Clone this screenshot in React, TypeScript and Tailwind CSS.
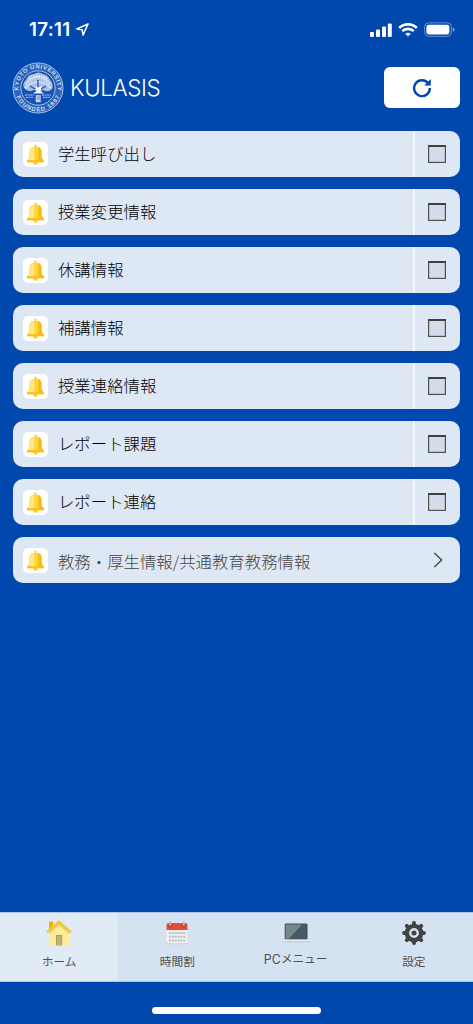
import type { ReactNode } from "react";

const notices = [
  "学生呼び出し",
  "授業変更情報",
  "休講情報",
  "補講情報",
  "授業連絡情報",
  "レポート課題",
  "レポート連絡",
];

function StatusBar() {
  return (
    <div className="flex h-[62px] items-start justify-between pt-[18px] pr-[18px] pl-[29px] text-white">
      <div className="flex items-center gap-[5px]">
        <span className="font-['Inter'] text-[18.8px] leading-[23px] font-semibold tracking-[0.3px]">17:11</span>
        <svg width="13" height="13" viewBox="0 0 13 13" fill="none" stroke="currentColor" strokeWidth="1.6" strokeLinejoin="round">
          <path d="M12 1 L0.9 6 L6.1 6.8 L7.1 12 Z" />
        </svg>
      </div>
      <div className="flex items-center pt-[4px]">
        <svg width="22" height="14" viewBox="0 0 22 14" fill="currentColor">
          <rect x="0" y="9" width="4" height="5" rx="1.1" />
          <rect x="6" y="6.6" width="4" height="7.4" rx="1.1" />
          <rect x="12" y="3.6" width="4" height="10.4" rx="1.1" />
          <rect x="17.8" y="0.5" width="4" height="13.5" rx="1.1" />
        </svg>
        <svg className="ml-[6px]" width="20" height="14" viewBox="0 0 20 14" fill="none" stroke="currentColor" strokeWidth="2.6">
          <path d="M1.2 5 C6 0.1 14 0.1 18.8 5" />
          <path d="M4.3 8.2 C7.4 5.1 12.6 5.1 15.7 8.2" />
          <path d="M10 13.6 L7.2 10.7 C8.8 9.3 11.2 9.3 12.8 10.7 Z" fill="currentColor" stroke="none" />
        </svg>
        <svg className="ml-[6px]" width="31" height="15" viewBox="0 0 31 15">
          <rect x="0.6" y="0.9" width="26.8" height="13.4" rx="4" fill="none" stroke="white" strokeOpacity="0.4" />
          <rect x="2.4" y="2.8" width="23" height="9.6" rx="2.4" fill="white" />
          <path d="M28.8 5.2 Q30.6 6 30.6 7.6 Q30.6 9.2 28.8 10 Z" fill="white" fillOpacity="0.5" />
        </svg>
      </div>
    </div>
  );
}

function Seal() {
  return (
    <svg className="shrink-0" width="52" height="52" viewBox="0 0 52 52" fill="none">
      <defs>
        <path id="sealTop" d="M10.4 38 A19.6 19.6 0 1 1 41.6 38" />
        <path id="sealBottom" d="M3.4 31 A23.1 23.1 0 0 0 48.6 31" />
      </defs>
      <circle cx="26" cy="26" r="25" fill="#2a63b9" stroke="#a9c2e6" strokeWidth="1" />
      <circle cx="26" cy="26" r="23.6" stroke="#5c88cb" strokeWidth="0.5" />
      <circle cx="26" cy="26" r="17.2" fill="#1552b2" stroke="#b7cbe9" strokeWidth="0.9" />
      <g fill="#d3dff2" fontFamily="Liberation Sans" fontSize="5.8" fontWeight="bold">
        <text>
          <textPath href="#sealTop" startOffset="50%" textAnchor="middle" textLength="66">KYOTO UNIVERSITY</textPath>
        </text>
        <text>
          <textPath href="#sealBottom" startOffset="50%" textAnchor="middle" textLength="55">FOUNDED 1897</textPath>
        </text>
      </g>
      <path d="M12 26 Q10 21 14 18 Q16 12 22 12 Q26 9 31 12 Q36 13 38 18 Q42 22 40 27 Q36 31 31 28 Q27 30 22 28 Q16 31 12 26 Z" fill="#a8c0e4" />
      <path d="M14 22 Q26 8 38 22 M13 26 Q26 14 39 26 M17 17 Q26 11 35 17" stroke="#e3ebf7" strokeWidth="2" strokeDasharray="1.5 1" />
      <path d="M18 24 L23 27 M34 24 L29 27 M26 18 V25" stroke="#1552b2" strokeWidth="1.3" />
      <path d="M23.5 24 L24.5 29 L21 31.5 H32 L28.6 29 L29.5 24 L26.5 26 Z" fill="#f4f8ff" />
      <path d="M13 33 H22 M30 33 H39 M14 35.3 H21 M31 35.3 H38" stroke="#b7cbe9" strokeWidth="1" strokeDasharray="2 0.6" />
      <rect x="23.7" y="33.2" width="5" height="7" fill="#c8d7ee" />
      <path d="M24.5 35 H28 M24.5 37 H28" stroke="#2a63b9" strokeWidth="0.6" />
    </svg>
  );
}

function Bell() {
  return (
    <div className="flex h-[25px] w-[25px] shrink-0 items-center justify-center rounded-[5px] bg-white">
      <svg width="19" height="21" viewBox="0 0 19 21">
        <circle cx="9.5" cy="1.8" r="1.3" fill="#fdd23b" />
        <circle cx="9.5" cy="18.6" r="2.2" fill="#ffc928" />
        <path d="M3.4 7.5 Q3.6 2.8 9.5 2.7 Q15.4 2.8 15.6 7.5 V12.5 Q15.8 14.6 18 16.4 V18.2 H1 V16.4 Q3.2 14.6 3.4 12.5 Z" fill="#fdd23b" />
        <path d="M3.9 7.2 Q4.3 3.8 8.4 3.2 V16.4 H1.6 Q3.7 14.6 3.9 12.5 Z" fill="#ffe782" />
        <path d="M12 3.1 Q15.4 4 15.6 7.5 V12.5 Q15.8 14.6 18 16.4 H12.4 Z" fill="#f8bd12" />
        <path d="M1 16.3 H18 V18.2 H1 Z" fill="#f9bd17" />
      </svg>
    </div>
  );
}

function NoticeRow({ label }: { label: string }) {
  return (
    <li className="flex h-[46px] overflow-hidden rounded-[10px] bg-[#dee8f4]">
      <div className="flex flex-1 items-center gap-[10.4px] pl-[10px]">
        <Bell />
        <span className="pb-[2px] text-[16.4px] leading-[24px] font-light text-black">{label}</span>
      </div>
      <div className="flex w-[47px] items-center justify-center border-l-2 border-[#f5f9fd]">
        <svg className="mr-[2px]" width="18" height="18" viewBox="0 0 18 18">
          <rect x="0.6" y="0.6" width="16.8" height="16.8" fill="#d2dcea" stroke="#505050" strokeWidth="1.2" />
          <path d="M0 1 H18" stroke="#404040" strokeWidth="2" />
        </svg>
      </div>
    </li>
  );
}

function HomeIcon() {
  return (
    <svg width="26" height="26" viewBox="0 0 26 26">
      <path d="M3 1.5 H7.2 V8 L3 11 Z" fill="#f3ad0c" />
      <path d="M13 3 L23.3 11.5 V25.3 H3 V11.5 Z" fill="#ffec94" />
      <path d="M13 5.2 L23.3 14 V12 L13 3 L3 12 V14 Z" fill="#d9c88a" />
      <path d="M13 0.3 L25.9 11.4 L24.5 13 L13 3.4 L1.7 13 L0.2 11.4 Z" fill="#fcc71d" />
      <rect x="10" y="15" width="6.2" height="10.3" fill="#a9a06d" />
      <rect x="11" y="16" width="4.2" height="9.3" fill="#bdb477" />
    </svg>
  );
}

function CalendarIcon() {
  return (
    <svg width="22" height="24" viewBox="0 0 22 24">
      <rect x="0.5" y="2" width="21" height="21.3" rx="2" fill="#c9cfd2" />
      <rect x="0.5" y="2" width="21" height="20.3" rx="2" fill="#f1f1f1" />
      <path d="M0.5 9 V4 Q0.5 2 2.5 2 H19.5 Q21.5 2 21.5 4 V9 Z" fill="#e84b3d" />
      <path d="M4.2 3.7 V4.5 M17.8 3.7 V4.5" stroke="#b83227" strokeWidth="3.4" strokeLinecap="round" />
      <path d="M4.2 1 V4 M17.8 1 V4" stroke="#b7c0c5" strokeWidth="1.9" strokeLinecap="round" />
      <path d="M3 12 H19.4 M3 15.8 H19.4 M3 19.4 H19.4" stroke="#b9bfc3" strokeWidth="2" strokeDasharray="2 0.85" />
    </svg>
  );
}

function LaptopIcon() {
  return (
    <svg width="28" height="20" viewBox="0 0 28 20">
      <rect x="2.7" y="0.5" width="22.8" height="16.5" rx="1.2" fill="#3c5060" />
      <rect x="3.7" y="1.5" width="20.8" height="14.5" fill="#465967" />
      <path d="M3.7 1.5 H20 L6.5 16 H3.7 Z" fill="#78858b" />
      <path d="M0.3 16.6 H27.7 V18 Q27 19.3 25.5 19.3 H2.5 Q1 19.3 0.3 18 Z" fill="#c3c8ca" />
      <rect x="0.3" y="16.6" width="27.4" height="1.5" fill="#eceeed" />
    </svg>
  );
}

function GearIcon() {
  return (
    <svg width="24" height="24" viewBox="-12 -12 24 24">
      <g fill="none" stroke="#434343" strokeWidth="4" strokeLinecap="round">
        <path d="M0 -9.9 V-7 M0 9.9 V7 M-9.9 0 H-7 M9.9 0 H7" />
        <path d="M-7.2 -7.2 L-5 -5 M7.2 7.2 L5 5 M-7.2 7.2 L-5 5 M7.2 -7.2 L5 -5" />
      </g>
      <circle r="7.1" fill="none" stroke="#434343" strokeWidth="4.4" />
      <circle r="2.5" fill="#434343" />
    </svg>
  );
}

function Tab({ icon, active, children }: { icon: ReactNode; active?: boolean; children: ReactNode }) {
  return (
    <a
      className={`flex flex-1 flex-col items-center border-y border-[#afc5e1] pt-[7px] text-[11.7px] leading-[18px] text-[#505050] ${
        active ? "bg-[#e1ebf6]" : "bg-[#d5e2f2]"
      }`}
    >
      <div className="flex h-[26px] items-center">{icon}</div>
      {children}
    </a>
  );
}

export default function App() {
  return (
    <div className="flex h-[1024px] w-[473px] flex-col bg-[#0047ae] font-['Noto_Sans_CJK_JP',sans-serif]">
      <StatusBar />
      <header className="flex h-[51px] items-center justify-between pr-[13px] pl-[12px]">
        <div className="flex items-center gap-[6px]">
          <Seal />
          <h1 className="font-['Inter'] text-[22.4px] leading-[30px] font-[350] tracking-[-0.35px] text-white">KULASIS</h1>
        </div>
        <button className="flex h-[41px] w-[76px] items-center justify-center rounded-[6px] bg-white">
          <svg width="20" height="20" viewBox="0 0 20 20" fill="none">
            <path d="M16.2 5.3 A7.9 7.9 0 1 0 17.9 10" stroke="#0047ae" strokeWidth="2.4" />
            <path d="M18.8 1 V7.5 H12.2 Z" fill="#0047ae" />
          </svg>
        </button>
      </header>

      <ul className="flex flex-1 flex-col gap-[12px] pt-[18.4px] pr-[13px] pl-[12.6px]">
        {notices.map((label) => (
          <NoticeRow key={label} label={label} />
        ))}
        <li className="flex h-[46px] items-center gap-[10.4px] rounded-[10px] bg-[#dee8f4] pr-[17px] pl-[10px]">
          <Bell />
          <span className="flex-1 pt-[2px] text-[16.4px] leading-[24px] font-light text-[#444]">教務・厚生情報/共通教育教務情報</span>
          <svg width="10" height="16" viewBox="0 0 10 16" fill="none" stroke="#454545" strokeWidth="1.4">
            <path d="M1.3 1 L8.7 8 L1.3 15" />
          </svg>
        </li>
      </ul>

      <nav className="flex h-[70px]">
        <Tab icon={<HomeIcon />} active>
          <span className="pt-[6px]">ホーム</span>
        </Tab>
        <Tab icon={<CalendarIcon />}>
          <span className="pt-[6px]">時間割</span>
        </Tab>
        <Tab icon={<LaptopIcon />}>
          <span className="flex pt-[3px]">
            <span className="pt-[2px] font-['Inter'] text-[12.4px]">PC</span>
            メニュー
          </span>
        </Tab>
        <Tab icon={<GearIcon />}>
          <span className="pt-[6px]">設定</span>
        </Tab>
      </nav>
      <div className="flex h-[42px] justify-center pt-[25px]">
        <div className="h-[7px] w-[169px] rounded-full bg-white" />
      </div>
    </div>
  );
}
